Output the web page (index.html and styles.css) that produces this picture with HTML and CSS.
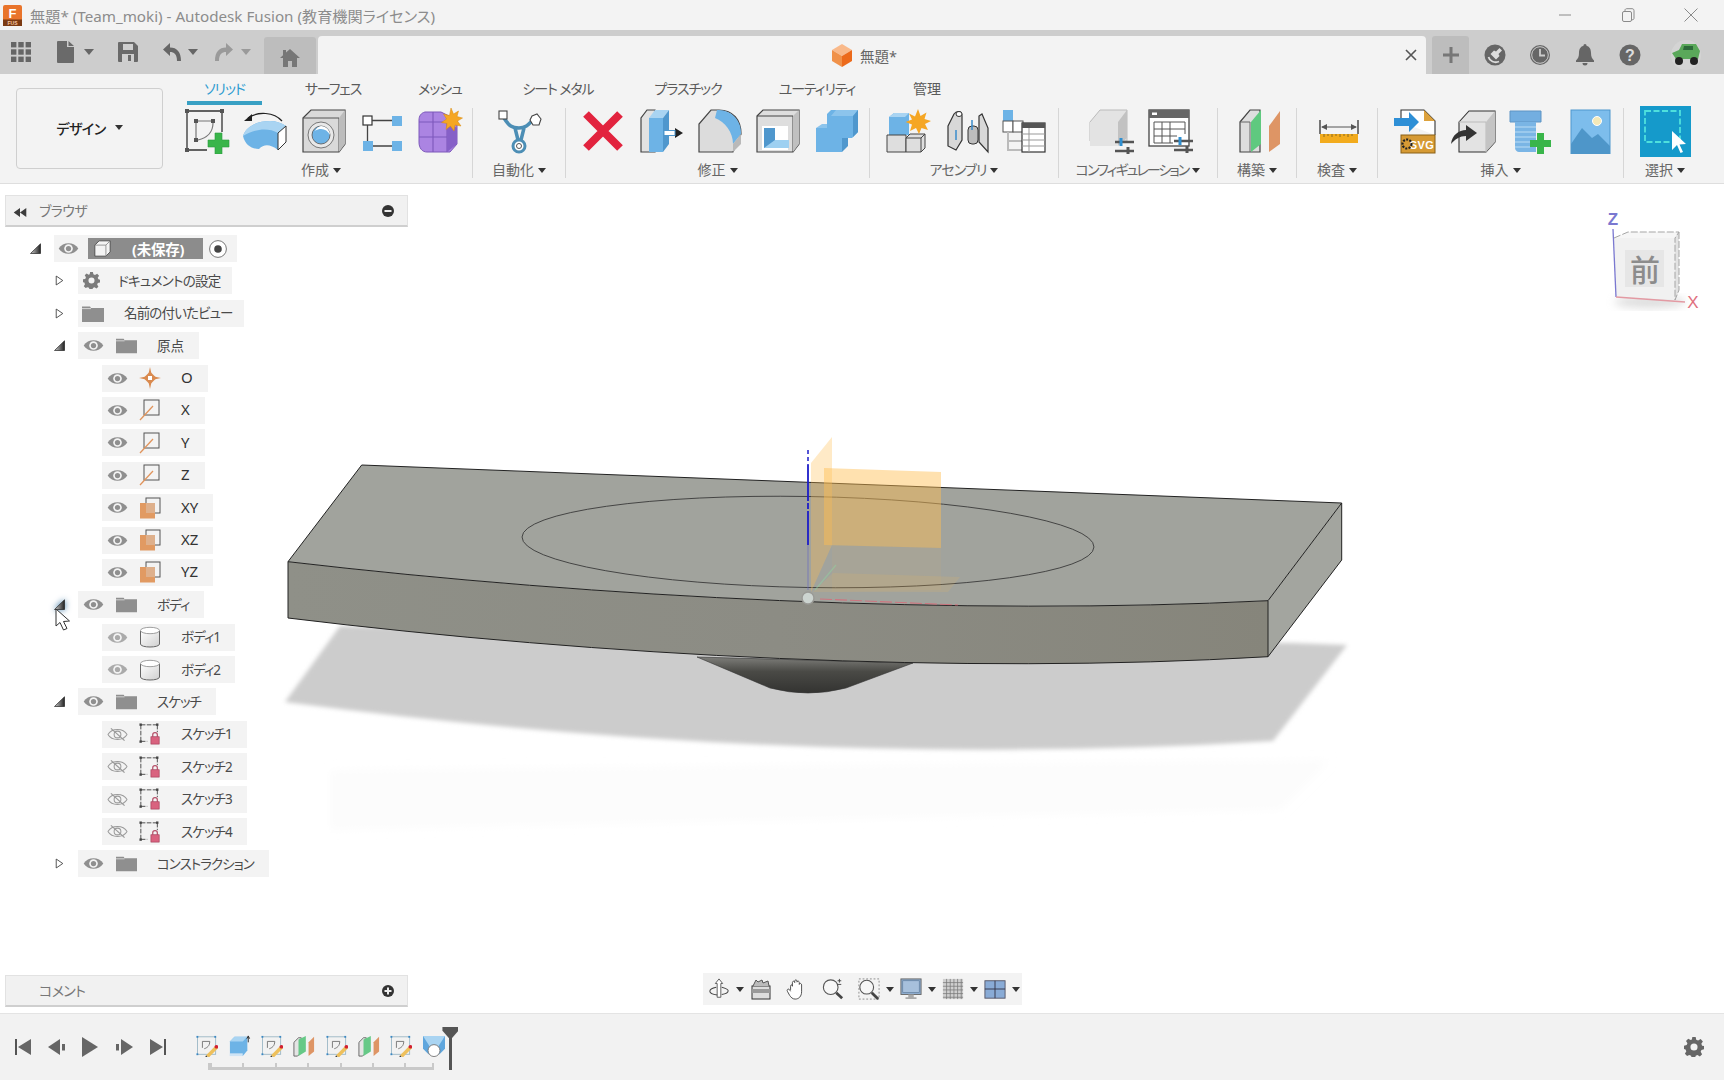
FILE: index.html
```html
<!DOCTYPE html>
<html lang="ja">
<head>
<meta charset="utf-8">
<title>Autodesk Fusion</title>
<link rel="stylesheet" href="styles.css">
</head>
<body>
<svg class="defs" aria-hidden="true">
  <defs>
    <linearGradient id="twistg" x1="0" y1="0" x2="1" y2="0"><stop offset="0" stop-color="#d0d0d0"/><stop offset="1" stop-color="#222"/></linearGradient>
    <linearGradient id="bodyg" x1="0" y1="0" x2="1" y2="1"><stop offset="0" stop-color="#fff"/><stop offset="1" stop-color="#cfcfcf"/></linearGradient>
    <symbol id="eye" viewBox="0 0 22 16"><path d="M0.5 8C5 0.5 17 0.5 21.5 8C17 15.5 5 15.5 0.5 8Z" fill="#8f8f8f"/><circle cx="11" cy="8" r="4.6" fill="#f3f3f3"/><circle cx="11" cy="8" r="2.8" fill="#8f8f8f"/></symbol>
    <symbol id="eyeoff" viewBox="0 0 22 16"><path d="M0.8 8C5 1 17 1 21.2 8C17 15 5 15 0.8 8Z" fill="none" stroke="#9a9a9a" stroke-width="1.1"/><circle cx="11" cy="8" r="3.6" fill="none" stroke="#9a9a9a" stroke-width="1.1"/><path d="M4 1.5L18.5 14.5" stroke="#9a9a9a" stroke-width="1.3"/></symbol>
    <symbol id="folder" viewBox="0 0 22 17"><path d="M0 1.5h8l1 1.5h13v14H0Z" fill="#8f8f8f"/><path d="M0 3.6h9" stroke="#e8e8e8" stroke-width="0.8"/></symbol>
    <symbol id="twopen" viewBox="0 0 11 11"><path d="M0.5 10.5L10.5 0.8V10.5Z" fill="url(#twistg)" stroke="#222" stroke-width="0.7"/></symbol>
    <symbol id="twclosed" viewBox="0 0 11 13"><path d="M1.5 1L9.5 6.5L1.5 12Z" fill="#fff" stroke="#333" stroke-width="1"/></symbol>
    <symbol id="axis" viewBox="0 0 22 22"><rect x="5" y="1" width="15" height="15" fill="none" stroke="#555" stroke-width="1"/><path d="M1 21L14 7" stroke="#e0945c" stroke-width="1.3"/></symbol>
    <symbol id="plane" viewBox="0 0 22 22"><rect x="7" y="1" width="14" height="15" fill="none" stroke="#555" stroke-width="1"/><rect x="1" y="6" width="15" height="15.5" fill="#e19a62"/><rect x="7" y="6" width="9" height="10" fill="#deb08c"/></symbol>
    <symbol id="body" viewBox="0 0 22 22"><path d="M1.5 5v13c0 4 19 4 19 0V5" fill="url(#bodyg)" stroke="#666" stroke-width="1"/><ellipse cx="11" cy="4.5" rx="9.5" ry="3.2" fill="#fff" stroke="#888" stroke-width="0.8"/></symbol>
    <symbol id="sketchlock" viewBox="0 0 24 24"><g fill="none" stroke="#444" stroke-width="1" stroke-dasharray="5 1.5"><path d="M2 2H19M2 2V20M2 20H9M20 2V10"/></g><g fill="#444"><rect x="0.5" y="0.5" width="2.6" height="2.6"/><rect x="18.6" y="0.5" width="2.6" height="2.6"/><rect x="0.5" y="19" width="2.6" height="2.6"/></g><path d="M15 15v-2.2c0-3 5-3 5 0V15" fill="none" stroke="#b34b64" stroke-width="1.3"/><rect x="13" y="15" width="9" height="8" fill="#d9637f" stroke="#a03a55" stroke-width="0.7"/></symbol>
    <symbol id="tlsketch" viewBox="0 0 24 24"><rect x="1.5" y="2" width="20" height="19" fill="none" stroke="#8ab" stroke-width="0.8"/><g fill="#3b88c3"><rect x="0.5" y="1" width="2" height="2"/><rect x="20" y="1" width="2" height="2"/><rect x="0.5" y="20" width="2" height="2"/></g><path d="M7 7h8M7 7v7M15 7c0 5-3 7-6 8" fill="none" stroke="#666" stroke-width="0.9"/><path d="M11 22L21 12l3 2.5L14 24.5Z" fill="#eec05c"/><path d="M11 22l-1 2.5 3 0Z" fill="#333"/><circle cx="22.2" cy="12.8" r="2" fill="#d21f2f"/></symbol>
    <symbol id="tlplane" viewBox="0 0 24 24"><path d="M1 8L6 3H9V19L5 23H1Z" fill="#e4e4e4" stroke="#555" stroke-width="0.9"/><path d="M6 5L14 1V18L6 23Z" fill="#66c987"/><path d="M17 8L23 2V18L17 23Z" fill="#de9565"/></symbol>
  </defs>
</svg>

<header class="titlebar">
  <svg class="appicon" viewBox="0 0 19 21"><rect width="19" height="21" rx="2" fill="#e9742b"/><rect y="14.5" width="19" height="6.5" fill="#7b3a12"/><text x="9.5" y="12.5" class="appicon-f">F</text><text x="9.5" y="19.8" class="appicon-s">FUS</text></svg>
  <span class="title">無題* (Team_moki) - Autodesk Fusion (教育機関ライセンス)</span>
  <div class="winctl">
    <svg viewBox="0 0 14 14"><path d="M1 7H13" stroke="#8a8a8a" fill="none"/></svg>
    <svg viewBox="0 0 14 14"><rect x="1.5" y="3.5" width="9" height="10" rx="1.5" fill="none" stroke="#8a8a8a"/><path d="M4 3.2V2.2C4 1 5 .7 6 .7h5c1.4 0 2 .8 2 2v7.5c0 1-.6 1.6-2 1.6" fill="none" stroke="#8a8a8a"/></svg>
    <svg viewBox="0 0 14 14"><path d="M.5 .5L13.5 13.5M13.5 .5L.5 13.5" stroke="#8a8a8a" fill="none"/></svg>
  </div>
</header>

<nav class="tabbar">
  <div class="qat">
    <svg class="q-grid" viewBox="0 0 20 20"><g fill="#666"><rect width="5.4" height="5.4"/><rect x="7.3" width="5.4" height="5.4"/><rect x="14.6" width="5.4" height="5.4"/><rect y="7.3" width="5.4" height="5.4"/><rect x="7.3" y="7.3" width="5.4" height="5.4"/><rect x="14.6" y="7.3" width="5.4" height="5.4"/><rect y="14.6" width="5.4" height="5.4"/><rect x="7.3" y="14.6" width="5.4" height="5.4"/><rect x="14.6" y="14.6" width="5.4" height="5.4"/></g></svg>
    <svg class="q-doc" viewBox="0 0 18 22"><path d="M1 0H10V6H17V21a1 1 0 0 1-1 1H1a1 1 0 0 1-1-1V1a1 1 0 0 1 1-1ZM11.500 0L17 5H11.500Z" fill="#6a6a6a"/></svg>
    <span class="caret q-c1"></span>
    <svg class="q-save" viewBox="0 0 20 20"><path d="M1 0H16L20 4V19a1 1 0 0 1-1 1H1a1 1 0 0 1-1-1V1a1 1 0 0 1 1-1Z" fill="#6a6a6a"/><rect x="5" y="2" width="10" height="6" fill="#cfcfcf"/><rect x="4" y="12" width="12" height="8" fill="#cfcfcf"/><rect x="10" y="13" width="3" height="6" fill="#6a6a6a"/></svg>
    <svg class="q-undo" viewBox="0 0 20 20"><path d="M8 1L1 7.500L8 14V10C12 10 15 12 15 19H19C19 10 15 5.500 8 5.500Z" fill="#666"/></svg>
    <span class="caret q-c2"></span>
    <svg class="q-redo" viewBox="0 0 20 20"><path d="M12 1L19 7.500L12 14V10C8 10 5 12 5 19H1C1 10 5 5.500 12 5.500Z" fill="#9a9a9a"/></svg>
    <span class="caret q-c3"></span>
    <div class="hometab"><svg viewBox="0 0 20 18"><path d="M10 0L20 9H17V18H12V12H8V18H3V9H0L3 6.300V1H6V3.600Z" fill="#777"/></svg></div>
  </div>
  <div class="doctab">
    <svg class="cube" viewBox="0 0 20 23"><path d="M10 0L20 6L10 12L0 6Z" fill="#f9b98a"/><path d="M0 6L10 12V23L0 17Z" fill="#f09149"/><path d="M20 6L10 12V23L20 17Z" fill="#ec6a1b"/></svg>
    <span class="doctitle">無題*</span>
    <svg class="tabclose" viewBox="0 0 12 12"><path d="M1 1L11 11M11 1L1 11" stroke="#555" stroke-width="1.6" fill="none"/></svg>
  </div>
  <div class="plustab"><svg viewBox="0 0 16 16"><path d="M6.500 0h3v6.500H16v3H9.500V16h-3V9.500H0v-3h6.500Z" fill="#777"/></svg></div>
  <div class="tabicons">
    <svg class="ti" viewBox="0 0 22 22"><circle cx="11" cy="11" r="10.500" fill="#666"/><path d="M15.500 4l-3.500 3.500-2-1-3.500 3.500 5.500 5.500 3.500-3.500-1-2 3.500-3.500Z" fill="#ddd"/><path d="M4.500 13c1 4 6 6.500 10.500 4.500" fill="none" stroke="#ddd" stroke-width="1.800"/></svg>
    <svg class="ti" viewBox="0 0 22 22"><circle cx="11" cy="11" r="10" fill="#666"/><circle cx="11" cy="11" r="8.300" fill="none" stroke="#ccc" stroke-width="1"/><path d="M11 5V11.500H16" fill="none" stroke="#ccc" stroke-width="1.800"/></svg>
    <svg class="ti" viewBox="0 0 22 22"><path d="M11 0c1 0 1.500.8 1.500 1.800C16 2.700 17 6 17 9c0 4 1 5.500 3 7.500V18H2v-1.500C4 14.500 5 13 5 9c0-3 1-6.300 4.500-7.200C9.500.8 10 0 11 0ZM8.500 19h5a2.500 2.500 0 0 1-5 0Z" fill="#666"/></svg>
    <svg class="ti" viewBox="0 0 22 22"><circle cx="11" cy="11" r="10.500" fill="#666"/><text x="11" y="16.500" class="help-q">?</text></svg>
    <svg class="avatar" viewBox="0 0 30 30"><circle cx="15" cy="15" r="15" fill="#d4d4d4"/><path d="M1 13L8 10L11 4H25L29 11L27 19H5Z" fill="#5aa85a"/><path d="M13 6H22V10H12Z" fill="#2d6a3a"/><circle cx="8" cy="21" r="4" fill="#222"/><circle cx="23" cy="21" r="4" fill="#222"/></svg>
  </div>
</nav>

<section class="ribbon">
  <div class="design-wrap"><button class="design">デザイン<span class="caret"></span></button></div>
  <div class="ribbon-main">
    <div class="tabs">
      <span class="tab active">ソリッド</span>
      <span class="tab">サーフェス</span>
      <span class="tab">メッシュ</span>
      <span class="tab">シート メタル</span>
      <span class="tab">プラスチック</span>
      <span class="tab">ユーティリティ</span>
      <span class="tab">管理</span>
    </div>
    <div class="groups">
      <div class="group">
        <div class="icons">
          <svg class="ic" viewBox="0 0 46 46"><g fill="none" stroke="#333" stroke-width="1.300"><path d="M3 3H38M3 3V42M3 42H23M38 3V24"/></g><g fill="#555"><rect x="1" y="1" width="4" height="4"/><rect x="36" y="1" width="4" height="4"/><rect x="1" y="40" width="4" height="4"/><rect x="10" y="11" width="4" height="4"/><rect x="27" y="11" width="4" height="4"/><rect x="10" y="30" width="4" height="4"/></g><path d="M14 13h13M12 15v15M29 15c0 9-6 15-15 17" fill="none" stroke="#777" stroke-width="1.200"/><path d="M31 25h7v7h7v7h-7v7h-7v-7h-7v-7h7Z" fill="#39b54a" stroke="#2a9a3c" stroke-width=".6"/></svg>
          <svg class="ic" viewBox="0 0 46 46"><path d="M40 13C32 4 16 3 6 10" fill="none" stroke="#222" stroke-width="1.200"/><path d="M2 13L10 6L10 13Z" fill="#222"/><path d="M1 28C4 18 16 13 28 13C34 13 40 15 44 18L36 26V42C28 36 22 36 17 41C10 41 3 37 1 28Z" fill="#6db3e6"/><path d="M1 28C4 18 16 13 28 13C34 13 40 15 44 18L36 25C26 19 12 21 1 28Z" fill="#a9d4f2"/><path d="M36 25L44 18V34L36 42Z" fill="#fff" stroke="#333" stroke-width="1"/></svg>
          <svg class="ic" viewBox="0 0 46 46"><path d="M2 10L10 2H44V36L38 44H2Z" fill="#d9d9d9" stroke="#444" stroke-width="1.200"/><path d="M2 10H38V44" fill="none" stroke="#555"/><path d="M38 10L44 2V36L38 44Z" fill="#bcbcbc"/><circle cx="20" cy="27" r="13" fill="#e8e8e8" stroke="#777" stroke-width="1"/><circle cx="20" cy="27" r="9" fill="#6db3e6" stroke="#555" stroke-width=".8"/><path d="M20 18a9 9 0 0 1 9 9c-2-4-5-6-9-6-2 0-4 .5-6 2a9 9 0 0 1 6-5Z" fill="#fff"/></svg>
          <svg class="ic" viewBox="0 0 46 46"><rect x="4" y="8" width="9" height="9" fill="#fff" stroke="#333" stroke-width="1.200"/><rect x="33" y="8" width="10" height="10" fill="#6db3e6"/><rect x="4" y="33" width="10" height="10" fill="#6db3e6"/><rect x="33" y="33" width="10" height="10" fill="#6db3e6"/><path d="M13 12.500H33M8.500 17V33M14 38H33" stroke="#444" stroke-width="1.300" fill="none"/></svg>
          <svg class="ic" viewBox="0 0 46 46"><path d="M8 4H24L40 12V36L33 44H10C5 44 2 40 2 34V12C2 8 4 5 8 4Z" fill="#ab84e2" stroke="#7d58bb"/><path d="M2 14H30V44M2 29H30M16 4V44" fill="none" stroke="#7d58bb" stroke-width="1.100"/><path d="M30 14L40 20V36L30 44Z" fill="#8660c7"/><path d="M34 0l2.500 6 5-3-1.500 5.500 5.500 1.500-5 3 3.500 5-6-1-1 6-3.500-5-4.500 3.500 1-6-5.500-1 5-3.500-3-5 6 1.500Z" fill="#f5a623" stroke="#d98b0e" stroke-width=".5"/></svg>
        </div>
        <div class="glabel"><span>作成</span><span class="caret"></span></div>
      </div>
      <div class="group">
        <div class="icons noshift">
          <svg class="ic" viewBox="0 0 46 46"><path d="M8 10C13 18 16 20 23 20C30 20 33 16 37 12M19 20L22 32M28 20L25 32" fill="none" stroke="#4c8eb5" stroke-width="3.500"/><circle cx="23" cy="38" r="6" fill="#fff" stroke="#4c8eb5" stroke-width="3"/><circle cx="23" cy="38" r="2.500" fill="none" stroke="#555"/><rect x="3" y="3" width="8" height="8" fill="#fff" stroke="#444" stroke-width="1.100"/><path d="M36 8l5-2 4 5-2 6-6 0-3-5Z" fill="#fff" stroke="#444" stroke-width="1.100"/></svg>
        </div>
        <div class="glabel"><span>自動化</span><span class="caret"></span></div>
      </div>
      <div class="group">
        <div class="icons">
          <svg class="ic" viewBox="0 0 46 46"><path d="M4 6L38 40M38 6L4 40" stroke="#e2233e" stroke-width="8" fill="none" transform="translate(2 0)"/></svg>
          <svg class="ic" viewBox="0 0 46 46"><path d="M2 44V10L8 2H16V44Z" fill="#e2e2e2" stroke="#444" stroke-width="1.200"/><path d="M10 10H24V44H10Z" fill="#6db3e6"/><path d="M10 10L16 2H30L24 10Z" fill="#a9d4f2"/><path d="M24 10L30 2V36L24 44Z" fill="#4f97cd"/><path d="M26 24H36V20L44 25L36 30V26H26Z" fill="#222"/><rect x="25" y="22.500" width="11" height="5" fill="#fff" stroke="#4f97cd"/></svg>
          <svg class="ic" viewBox="0 0 46 46"><path d="M2 44V16L14 2H22C36 2 44 12 44 26L36 44Z" fill="#dcdcdc" stroke="#444" stroke-width="1.200"/><path d="M20 2C34 1 45 13 44 26L36 36C36 24 28 14 18 10Z" fill="#6db3e6"/><path d="M36 36L44 26V36L36 44Z" fill="#b9b9b9"/></svg>
          <svg class="ic" viewBox="0 0 46 46"><path d="M2 8L8 2H44V36L38 44H2Z" fill="#dedede" stroke="#444" stroke-width="1.200"/><path d="M2 8H38V44" fill="none" stroke="#444"/><path d="M38 8L44 2V36L38 44Z" fill="#c0c0c0"/><rect x="7" y="18" width="26" height="24" fill="#fff"/><path d="M9 20H19V32L34 32V40H9Z" fill="#9ed0f1"/><path d="M9 20H20V32L9 40Z" fill="#4f97cd"/></svg>
          <svg class="ic" viewBox="0 0 46 46"><path d="M17 2L13 6V20H2V44H28V30H38L44 24V2Z" fill="#6db3e6"/><path d="M22 2H44L39 8H17Z" fill="#8cc4ec"/><path d="M39 8L44 2V24L39 29Z" fill="#4f97cd"/><path d="M2 20L8 16H13V20Z" fill="#8cc4ec"/><path d="M28 30L34 30V38L28 44Z" fill="#4f97cd"/></svg>
        </div>
        <div class="glabel"><span>修正</span><span class="caret"></span></div>
      </div>
      <div class="group">
        <div class="icons">
          <svg class="ic" viewBox="0 0 46 46"><path d="M4 27V9L9 5H24V27Z" fill="#6db3e6"/><path d="M4 9L9 5H24L20 9Z" fill="#a9d4f2"/><path d="M2 44V27H21V44Z" fill="#dedede" stroke="#444"/><path d="M21 44V30L25 26H40V40L36 44Z" fill="#dedede" stroke="#444"/><path d="M36 44V30H21M36 30L40 26" fill="none" stroke="#444"/><path d="M33 1l2.500 7 6-3.500-2 6.500 6.500 2-6 3 3 6-6.500-2-2.500 6-3-6-6 3 2-6.500-6.500-2.500 6.500-2.500-3-6 6 3Z" fill="#f5a623"/></svg>
          <svg class="ic" viewBox="0 0 46 46"><path d="M4 18L10 6C13 2 18 3 18 8V32L12 42L4 38Z" fill="#d8d8d8" stroke="#333" stroke-width="1.200"/><ellipse cx="15" cy="6" rx="3" ry="2.500" fill="#fff" stroke="#333"/><path d="M38 6L44 20V44L35 34V8Z" fill="#d8d8d8" stroke="#333" stroke-width="1.200"/><rect x="24" y="18" width="10" height="18" rx="4" fill="#bdbdbd" stroke="#333"/><path d="M28 12V22M12 22V32" stroke="#3a8ccc" stroke-width="1.500"/></svg>
          <svg class="ic" viewBox="0 0 46 46"><rect x="1" y="2" width="10" height="11" fill="#6db3e6"/><rect x="1" y="13" width="10" height="11" fill="#fff" stroke="#555"/><rect x="11" y="13" width="10" height="11" fill="#fff" stroke="#555"/><path d="M6 24V42H20M6 33H20" stroke="#bbb" stroke-width="2" fill="none"/><rect x="20" y="15" width="23" height="29" fill="#fff" stroke="#333" stroke-width="1.200"/><rect x="20" y="15" width="23" height="5" fill="#555"/><path d="M20 26H43M20 32H43M20 38H43M27 20V44" stroke="#999" fill="none"/></svg>
        </div>
        <div class="glabel kana"><span>アセンブリ</span><span class="caret"></span></div>
      </div>
      <div class="group">
        <div class="icons">
          <svg class="ic" viewBox="0 0 46 46"><path d="M2 14L12 2H39V33H2Z" fill="#e3e3e3" stroke="#bbb"/><path d="M2 14H30V38H2Z" fill="#e3e3e3"/><path d="M30 14L39 2V30L30 38Z" fill="#c2c2c2"/><path d="M27 34H46M27 43H46" stroke="#555" stroke-width="2.500"/><path d="M33 30V38" stroke="#2f8fd1" stroke-width="3"/><path d="M40 39V46" stroke="#555" stroke-width="3"/></svg>
          <svg class="ic" viewBox="0 0 46 46"><rect x="2" y="2" width="40" height="36" fill="#fff" stroke="#444" stroke-width="1.300"/><rect x="2" y="2" width="40" height="8" fill="#666"/><rect x="5" y="4.500" width="5" height="2.500" fill="#fff"/><path d="M7 14H38M7 21H38M7 28H30M7 35H26M7 14V35M15 14V35M23 14V35M38 14V26" stroke="#555" fill="none"/><path d="M27 33H46M27 42H46" stroke="#555" stroke-width="2.500"/><path d="M33 29V37" stroke="#2f8fd1" stroke-width="3"/><path d="M40 38V45" stroke="#555" stroke-width="3"/></svg>
        </div>
        <div class="glabel kana-long"><span>コンフィギュレーション</span><span class="caret"></span></div>
      </div>
      <div class="group">
        <div class="icons">
          <svg class="ic" viewBox="0 0 46 46"><path d="M3 14L13 2H23V44H3Z" fill="#dedede" stroke="#444" stroke-width="1.200"/><path d="M14 14L24 2V36L14 44Z" fill="#5fc97f"/><path d="M3 14H13V44" fill="none" stroke="#666"/><path d="M32 18L43 3V36L32 44Z" fill="#de9565"/></svg>
        </div>
        <div class="glabel"><span>構築</span><span class="caret"></span></div>
      </div>
      <div class="group">
        <div class="icons">
          <svg class="ic" viewBox="0 0 46 46"><path d="M3 12V26M41 12V26" stroke="#333" stroke-width="1.300"/><path d="M5 19H39" stroke="#555"/><path d="M4 19L10 16V22ZM40 19L34 16V22Z" fill="#555"/><rect x="3" y="26" width="38" height="9" fill="#f2ab1d"/><path d="M7 26v3M11 26v2M15 26v3M19 26v2M23 26v3M27 26v2M31 26v3M35 26v2" stroke="#8a6a20"/></svg>
        </div>
        <div class="glabel"><span>検査</span><span class="caret"></span></div>
      </div>
      <div class="group">
        <div class="icons">
          <svg class="ic" viewBox="0 0 46 46"><path d="M9 14V2H32L43 13V27" fill="#fff" stroke="#333" stroke-width="1.100"/><path d="M32 2L43 13H32Z" fill="#dda23c"/><path d="M2 10H17V4L27 14L17 24V18H2Z" fill="#2e8fd6"/><rect x="9" y="27" width="34" height="18" fill="#d69a34" stroke="#8a6116"/><text x="30" y="41" class="svgtext">SVG</text><circle cx="15" cy="36" r="4.500" fill="none" stroke="#222" stroke-width="2.200" stroke-dasharray="2 1.300"/></svg>
          <svg class="ic" viewBox="0 0 46 46"><path d="M8 14L18 3H44V34L35 44H8Z" fill="#e3e3e3" stroke="#333" stroke-width="1.100"/><path d="M8 14H35V44" fill="none" stroke="#bbb"/><path d="M35 14L44 3V34L35 44Z" fill="#c4c4c4"/><path d="M0 36C1 27 8 22 15 22V17L26 25L15 33V28C9 28 4 31 0 36Z" fill="#333"/></svg>
          <svg class="ic" viewBox="0 0 46 46"><path d="M1 3H32V14H1Z" fill="#73aee0" stroke="#5e94c4"/><path d="M6 14H27V44H10C8 44 6 42 6 40Z" fill="#7ab5e5"/><path d="M6 19H27M6 24H27M6 29H27M6 34H25M6 39H21" stroke="#a6d0f0" stroke-width="1.500"/><path d="M24 25h7v7h7v7h-7v7h-7v-7h-7v-7h7Z" transform="translate(4 0)" fill="#39b54a"/></svg>
          <svg class="ic" viewBox="0 0 46 46"><rect x="3" y="2" width="39" height="45" fill="#7dbdec" stroke="#4f97cd"/><path d="M3 36L14 20L24 30L30 26L42 38V47H3Z" fill="#4e96c9"/><circle cx="29" cy="13" r="4.500" fill="#f3e9b8" stroke="#fff"/></svg>
        </div>
        <div class="glabel"><span>挿入</span><span class="caret"></span></div>
      </div>
      <div class="group last">
        <div class="icons noshift selicons">
          <svg class="sel" viewBox="0 0 51 51"><rect width="51" height="51" fill="#159acb"/><rect x="5" y="5" width="35" height="31" fill="none" stroke="#4ee0dd" stroke-width="1.800" stroke-dasharray="6 2.500"/><path d="M32 25L32 44L37 39L40.500 47L43 46L39.500 38.500L46 38Z" fill="#fff"/></svg>
        </div>
        <div class="glabel"><span>選択</span><span class="caret"></span></div>
      </div>
    </div>
  </div>
</section>

<main class="canvas">
  <svg class="scene" viewBox="0 184 1724 829">
    <defs>
      <filter id="soft" x="-5%" y="-5%" width="110%" height="110%"><feGaussianBlur stdDeviation="2"/></filter>
      <filter id="softer" x="-20%" y="-20%" width="140%" height="140%"><feGaussianBlur stdDeviation="4"/></filter>
      <linearGradient id="cone" x1="0" y1="0" x2="0" y2="1"><stop offset="0" stop-color="#7e7e7a"/><stop offset=".4" stop-color="#4a4a46"/><stop offset="1" stop-color="#333331"/></linearGradient>
      <linearGradient id="front" x1="0" y1="0" x2="1" y2="0"><stop offset="0" stop-color="#8f9088"/><stop offset=".5" stop-color="#8c8c84"/><stop offset="1" stop-color="#86857b"/></linearGradient>
    </defs>
    <path class="shadow-faint" d="M330 770L1330 760L1280 810L330 830Z" filter="url(#softer)"/>
    <path class="shadow" d="M340 626L285 702Q800 770 1273 741L1347 645L1293 643Z" filter="url(#soft)"/>
    <path d="M697 657L770 688Q808 698 846 688L913 663Z" fill="url(#cone)" stroke="#333" stroke-width=".6"/>
    <path class="face-top" d="M361.700 465L1341.700 503L1268 600.700C960 616 600 598 288 561.700Z"/>
    <path class="face-side" d="M1341.700 503V560L1268 656.700V600.700Z"/>
    <path d="M288 561.700C600 598 960 616 1268 600.700V656.700C960 675 600 656 288 618Z" fill="url(#front)"/>
    <g class="edge">
      <path d="M288 561.700L361.700 465L1341.700 503V560L1268 656.700C960 675 600 656 288 618Z"/>
      <path d="M288 561.700C600 598 960 616 1268 600.700L1341.700 503M1268 600.700V656.700"/>
    </g>
    <ellipse class="sketch" cx="808" cy="542" rx="286" ry="45.500" transform="rotate(1 808 542)"/>
    <path d="M811 463L832 437V545L811 592Z" fill="#ffbe50" opacity=".32"/>
    <path d="M824 468L941 472V548L824 545Z" fill="#ffbe50" opacity=".46"/>
    <path d="M832 545L941 548V590L832 592Z" fill="#ffbe50" opacity=".07"/>
    <path d="M833 573L960 577L948 592L813 592Z" fill="#ffbe50" opacity=".13"/>
    <path d="M808 450V465" stroke="#1c1cc8" stroke-width="1.500" stroke-dasharray="4 3"/>
    <path d="M808 465V545" stroke="#1c1cc8" stroke-width="1.800" stroke-dasharray="36 2 6 2"/>
    <path d="M808 545V590" stroke="#5a5ac8" stroke-width="1" opacity=".55"/>
    <path d="M820 599L958 605" stroke="#d86a78" stroke-width="1.100" stroke-dasharray="12 3" opacity=".8"/>
    <path d="M815 590L836 565" stroke="#8ed8a0" stroke-width="1.200" opacity=".45"/>
    <circle cx="808" cy="598" r="6" fill="#ccd4d0" stroke="#9a9a96" stroke-width="1.500"/>

    <ellipse cx="1650" cy="302" rx="36" ry="6" fill="#bbb" opacity=".5" filter="url(#softer)"/>
    <path class="cube-face" d="M1614 238H1675V300L1616 297Z"/>
    <path class="cube-face2" d="M1614 238L1628 232H1679L1675 238Z"/>
    <path class="cube-face3" d="M1675 238L1679 232V290L1675 300Z"/>
    <path class="cube-edge" d="M1614 238L1628 232H1679L1675 238M1679 232V290L1675 300V238"/>
    <rect x="1625" y="250" width="39" height="37" fill="#e6e6e6"/>
    <text x="1645" y="281" class="cube-text">前</text>
    <path d="M1613 229L1616 297" stroke="#7a78d0" stroke-width="1.300"/>
    <path d="M1616 297L1685 302" stroke="#e39aa3" stroke-width="1.300"/>
    <text x="1613" y="225" class="cube-z">Z</text>
    <text x="1693" y="308" class="cube-x">X</text>
  </svg>

  <aside class="browser">
    <div class="panelhead">
      <svg class="rew" viewBox="0 0 14 10"><path d="M7 0V10L0 5ZM14 0V10L7 5Z" fill="#3c3c3c"/></svg>
      <span class="panelname">ブラウザ</span>
      <svg class="panelbtn" viewBox="0 0 12 12"><circle cx="6" cy="6" r="6" fill="#333"/><rect x="2.500" y="5" width="7" height="2" fill="#eee"/></svg>
    </div>
    <div class="tree">
      <div class="line l0">
        <svg class="tw twa" viewBox="0 0 11 11"><use href="#twopen"/></svg>
        <div class="row root">
          <svg class="eye" viewBox="0 0 22 16"><use href="#eye"/></svg>
          <div class="rootbox"><svg viewBox="0 0 20 20"><path d="M1 6L6 1H19V14L14 19H1Z" fill="#f4f4f4" stroke="#444"/><path d="M1 6H14V19M14 6L19 1" fill="none" stroke="#888"/></svg><b>(未保存)</b></div>
          <svg class="radio" viewBox="0 0 18 18"><circle cx="9" cy="9" r="8.400" fill="#fff" stroke="#777"/><circle cx="9" cy="9" r="3.800" fill="#444"/></svg>
        </div>
      </div>
      <div class="line l1">
        <svg class="tw twc" viewBox="0 0 11 13"><use href="#twclosed"/></svg>
        <div class="row doc">
          <svg class="gear" viewBox="0 0 18 18"><path d="M7.500 0h3l.5 2.500 1.700.7L15 1.900 17 4l-1.400 2.100.7 1.700L18 8.200v2.900l-2.300.6-.7 1.600 1.300 2.200-2 2-2.200-1.300-1.600.7-.6 2.300h-3l-.5-2.400-1.700-.7L2.800 17l-2-2 1.300-2.100-.7-1.700L-.1 10.800V7.800l2.500-.5.7-1.700L1.800 3.500l2-2 2.200 1.300 1.100-.5ZM9 5.800a3.200 3.200 0 1 0 0 6.400 3.200 3.200 0 0 0 0-6.400Z" fill="#7c7c7c"/></svg>
          <span class="lab lab-doc">ドキュメントの設定</span>
        </div>
      </div>
      <div class="line l1">
        <svg class="tw twc" viewBox="0 0 11 13"><use href="#twclosed"/></svg>
        <div class="row doc">
          <svg class="fold-nv" viewBox="0 0 22 17"><use href="#folder"/></svg>
          <span class="lab lab-nv">名前の付いたビュー</span>
        </div>
      </div>
      <div class="line l1">
        <svg class="tw twa" viewBox="0 0 11 11"><use href="#twopen"/></svg>
        <div class="row">
          <svg class="eye" viewBox="0 0 22 16"><use href="#eye"/></svg>
          <span class="icell"><svg class="fold" viewBox="0 0 22 17"><use href="#folder"/></svg></span>
          <span class="lab lab-kanji">原点</span>
        </div>
      </div>
      <div class="line l2"><div class="row">
        <svg class="eye" viewBox="0 0 22 16"><use href="#eye"/></svg>
        <span class="icell"><svg class="ti-s" viewBox="0 0 22 22"><path d="M11 0L12.500 7H9.500ZM11 22L12.500 15H9.500ZM0 11L7 12.500V9.500ZM22 11L15 12.500V9.500Z" fill="#d98a4f"/><path d="M11 4.500L17.500 11L11 17.500L4.500 11Z" fill="#d98a4f"/><rect x="9" y="9" width="4" height="4" fill="#fff"/></svg></span>
        <span class="lab lat">O</span>
      </div></div>
      <div class="line l2"><div class="row">
        <svg class="eye" viewBox="0 0 22 16"><use href="#eye"/></svg>
        <span class="icell"><svg class="ti-s" viewBox="0 0 22 22"><use href="#axis"/></svg></span>
        <span class="lab lat">X</span>
      </div></div>
      <div class="line l2"><div class="row">
        <svg class="eye" viewBox="0 0 22 16"><use href="#eye"/></svg>
        <span class="icell"><svg class="ti-s" viewBox="0 0 22 22"><use href="#axis"/></svg></span>
        <span class="lab lat">Y</span>
      </div></div>
      <div class="line l2"><div class="row">
        <svg class="eye" viewBox="0 0 22 16"><use href="#eye"/></svg>
        <span class="icell"><svg class="ti-s" viewBox="0 0 22 22"><use href="#axis"/></svg></span>
        <span class="lab lat">Z</span>
      </div></div>
      <div class="line l2"><div class="row">
        <svg class="eye" viewBox="0 0 22 16"><use href="#eye"/></svg>
        <span class="icell"><svg class="ti-s" viewBox="0 0 22 22"><use href="#plane"/></svg></span>
        <span class="lab lat">XY</span>
      </div></div>
      <div class="line l2"><div class="row">
        <svg class="eye" viewBox="0 0 22 16"><use href="#eye"/></svg>
        <span class="icell"><svg class="ti-s" viewBox="0 0 22 22"><use href="#plane"/></svg></span>
        <span class="lab lat">XZ</span>
      </div></div>
      <div class="line l2"><div class="row">
        <svg class="eye" viewBox="0 0 22 16"><use href="#eye"/></svg>
        <span class="icell"><svg class="ti-s" viewBox="0 0 22 22"><use href="#plane"/></svg></span>
        <span class="lab lat">YZ</span>
      </div></div>
      <div class="line l1">
        <svg class="tw twa glow" viewBox="0 0 11 11"><use href="#twopen"/></svg>
        <div class="row">
          <svg class="eye" viewBox="0 0 22 16"><use href="#eye"/></svg>
          <span class="icell"><svg class="fold" viewBox="0 0 22 17"><use href="#folder"/></svg></span>
          <span class="lab">ボディ</span>
        </div>
      </div>
      <div class="line l2"><div class="row">
        <svg class="eye dim" viewBox="0 0 22 16"><use href="#eye"/></svg>
        <span class="icell"><svg class="ti-s" viewBox="0 0 22 22"><use href="#body"/></svg></span>
        <span class="lab">ボディ1</span>
      </div></div>
      <div class="line l2"><div class="row">
        <svg class="eye dim" viewBox="0 0 22 16"><use href="#eye"/></svg>
        <span class="icell"><svg class="ti-s" viewBox="0 0 22 22"><use href="#body"/></svg></span>
        <span class="lab">ボディ2</span>
      </div></div>
      <div class="line l1">
        <svg class="tw twa" viewBox="0 0 11 11"><use href="#twopen"/></svg>
        <div class="row">
          <svg class="eye" viewBox="0 0 22 16"><use href="#eye"/></svg>
          <span class="icell"><svg class="fold" viewBox="0 0 22 17"><use href="#folder"/></svg></span>
          <span class="lab">スケッチ</span>
        </div>
      </div>
      <div class="line l2"><div class="row">
        <svg class="eye" viewBox="0 0 22 16"><use href="#eyeoff"/></svg>
        <span class="icell"><svg class="ti-s" viewBox="0 0 24 24"><use href="#sketchlock"/></svg></span>
        <span class="lab">スケッチ1</span>
      </div></div>
      <div class="line l2"><div class="row">
        <svg class="eye" viewBox="0 0 22 16"><use href="#eyeoff"/></svg>
        <span class="icell"><svg class="ti-s" viewBox="0 0 24 24"><use href="#sketchlock"/></svg></span>
        <span class="lab">スケッチ2</span>
      </div></div>
      <div class="line l2"><div class="row">
        <svg class="eye" viewBox="0 0 22 16"><use href="#eyeoff"/></svg>
        <span class="icell"><svg class="ti-s" viewBox="0 0 24 24"><use href="#sketchlock"/></svg></span>
        <span class="lab">スケッチ3</span>
      </div></div>
      <div class="line l2"><div class="row">
        <svg class="eye" viewBox="0 0 22 16"><use href="#eyeoff"/></svg>
        <span class="icell"><svg class="ti-s" viewBox="0 0 24 24"><use href="#sketchlock"/></svg></span>
        <span class="lab">スケッチ4</span>
      </div></div>
      <div class="line l1">
        <svg class="tw twc" viewBox="0 0 11 13"><use href="#twclosed"/></svg>
        <div class="row">
          <svg class="eye" viewBox="0 0 22 16"><use href="#eye"/></svg>
          <span class="icell"><svg class="fold" viewBox="0 0 22 17"><use href="#folder"/></svg></span>
          <span class="lab">コンストラクション</span>
        </div>
      </div>
    </div>
  </aside>

  <svg class="cursor" viewBox="0 0 18 23"><path d="M1 1V18L5 14.500L8.500 22L12 20.500L8.500 13.500L14.500 13Z" fill="#fff" stroke="#333" stroke-width="1"/></svg>

  <div class="comments">
    <span class="panelname">コメント</span>
    <svg class="panelbtn" viewBox="0 0 12 12"><circle cx="6" cy="6" r="6" fill="#333"/><path d="M2.500 5h2.500V2.500h2V5h2.500v2H7v2.500H5V7H2.500Z" fill="#eee"/></svg>
  </div>

  <div class="viewbar">
    <svg class="vi vi-orbit" viewBox="0 0 22 24"><path d="M11 1L15 6H13V21H9V6H7Z" fill="#fff" stroke="#555"/><path d="M8 10C3 11 1 13 1 14.500C1 17 5 18 9 18.500M14 18C18 17.500 21 16 21 14C21 12.500 18 11 14 10" fill="none" stroke="#444" stroke-width="1.100"/></svg>
    <span class="caret vc"></span>
    <svg class="vi" viewBox="0 0 22 22"><rect x="2" y="8" width="18" height="13" fill="#ddd" stroke="#333"/><rect x="2" y="11" width="18" height="4" fill="#999"/><path d="M3 8L6 2L8 4L12 2L13 5L18 3L19 8" fill="#bbb" stroke="#555"/></svg>
    <svg class="vi" viewBox="0 0 24 24"><path d="M5 13V9C5 7 7 7 7 9V5C7 3 9.500 3 9.500 5V3.500C9.500 1.500 12 1.500 12 3.500V4.500C12 3 14.500 3 14.500 5V7C14.500 5.500 17 5.500 17 7.500V15C17 20 14 23 10 23C7 23 5.500 21 4 19L1.500 14.500C.5 12.500 3 11 4 13L5 14.500" fill="#fff" stroke="#444"/></svg>
    <svg class="vi" viewBox="0 0 24 24"><circle cx="9.500" cy="10" r="8" fill="#f7f7f7" stroke="#555" stroke-width="1.200"/><path d="M15.500 16L22 22" stroke="#444" stroke-width="3"/><path d="M19 1V5M17 3H21M17 7H21" stroke="#444" fill="none"/></svg>
    <svg class="vi" viewBox="0 0 24 24"><rect x="1" y="1" width="22" height="22" fill="none" stroke="#888" stroke-dasharray="2 2"/><circle cx="9.500" cy="10" r="7.500" fill="#f7f7f7" stroke="#555" stroke-width="1.200"/><path d="M15 16L22 23" stroke="#444" stroke-width="3"/></svg>
    <span class="caret vc"></span>
    <svg class="vi" viewBox="0 0 24 24"><rect x="1" y="1" width="22" height="17" fill="#8fadcf" stroke="#666"/><rect x="3" y="3" width="18" height="13" fill="#a7c0dc" stroke="#5a7897" stroke-width=".7"/><path d="M9 18H15V21H18V23H6V21H9Z" fill="#aaa"/></svg>
    <span class="caret vc"></span>
    <svg class="vi" viewBox="0 0 24 24"><rect x="1" y="1" width="22" height="22" fill="#cfcfcf"/><path d="M1 5H23M1 9H23M1 13H23M1 17H23M1 21H23M5 1V23M9 1V23M13 1V23M17 1V23M21 1V23" stroke="#777" stroke-width=".8"/></svg>
    <span class="caret vc"></span>
    <svg class="vi" viewBox="0 0 24 24"><rect x="1" y="3" width="22" height="19" fill="#89abd6" stroke="#556"/><path d="M12 3V22M1 12H23" stroke="#334" stroke-width="1"/></svg>
    <span class="caret vc"></span>
  </div>
</main>

<footer class="timeline">
  <div class="controls">
    <span class="cbtn"><svg viewBox="0 0 16 16"><rect y="0" width="2" height="16" fill="#555"/><path d="M16 0V16L3 8Z" fill="#666"/></svg></span>
    <span class="cbtn"><svg viewBox="0 0 18 16"><path d="M12 0V16L0 8Z" fill="#666"/><rect x="14" y="5" width="3" height="6.500" fill="#666"/></svg></span>
    <span class="cbtn"><svg viewBox="0 0 18 20"><path d="M1 0V20L17 10Z" fill="#666"/></svg></span>
    <span class="cbtn"><svg viewBox="0 0 18 16"><rect x="1" y="5" width="3" height="6.500" fill="#666"/><path d="M6 0V16L18 8Z" fill="#666"/></svg></span>
    <span class="cbtn"><svg viewBox="0 0 16 16"><path d="M0 0V16L13 8Z" fill="#666"/><rect x="14" y="0" width="2" height="16" fill="#555"/></svg></span>
  </div>
  <div class="track">
    <span class="tli"><svg viewBox="0 0 24 24"><use href="#tlsketch"/></svg></span>
    <span class="tli"><svg viewBox="0 0 24 24"><path d="M1 7L6 2H20V17L15 23H1Z" fill="#6db3e6"/><path d="M1 7L6 2H20L15 7Z" fill="#a9d4f2"/><path d="M1 20H15V23H1Z" fill="#cfe4f5"/><path d="M21 8V2M19.500 4L21 1L22.500 4" stroke="#222" fill="none"/></svg></span>
    <span class="tli"><svg viewBox="0 0 24 24"><use href="#tlsketch"/></svg></span>
    <span class="tli"><svg viewBox="0 0 24 24"><use href="#tlplane"/></svg></span>
    <span class="tli"><svg viewBox="0 0 24 24"><use href="#tlsketch"/></svg></span>
    <span class="tli"><svg viewBox="0 0 24 24"><use href="#tlplane"/></svg></span>
    <span class="tli"><svg viewBox="0 0 24 24"><use href="#tlsketch"/></svg></span>
    <span class="tli"><svg viewBox="0 0 24 24"><path d="M0 1H24V15L18 21H6L0 15Z" fill="#5fa6dd"/><path d="M0 1H24L17 12H7Z" fill="#a9d4f2"/><circle cx="12" cy="17" r="6.500" fill="#fff" stroke="#777"/></svg></span>
    <span class="bracket"></span>
    <span class="playhead"></span>
  </div>
  <svg class="tlgear" viewBox="0 0 18 18"><path d="M7.500 0h3l.5 2.500 1.700.7L15 1.900 17 4l-1.400 2.100.7 1.700L18 8.200v2.900l-2.300.6-.7 1.600 1.300 2.200-2 2-2.200-1.300-1.600.7-.6 2.300h-3l-.5-2.400-1.700-.7L2.800 17l-2-2 1.300-2.100-.7-1.700L-.1 10.800V7.800l2.500-.5.7-1.700L1.800 3.500l2-2 2.200 1.300 1.100-.5ZM9 5.800a3.200 3.200 0 1 0 0 6.400 3.200 3.200 0 0 0 0-6.400Z" fill="#666"/></svg>
</footer>
</body>
</html>
```
FILE: styles.css
```css
* { box-sizing: border-box; }
html, body { margin: 0; padding: 0; }
body {
  width: 1724px; height: 1080px; overflow: hidden;
  display: flex; flex-direction: column;
  background: #fff; color: #555;
  font-family: "Noto Sans", "Noto Sans CJK JP", sans-serif;
  font-feature-settings: "palt" 1;
}
svg { display: block; flex: none; }
.defs { position: absolute; width: 0; height: 0; }

.caret {
  display: inline-block; width: 0; height: 0; flex: none;
  border-left: 4px solid transparent; border-right: 4px solid transparent;
  border-top: 5px solid #333;
}

/* title bar */
.titlebar { height: 30px; background: #f3f3f3; display: flex; align-items: center; padding-left: 3px; flex: none; }
.appicon { width: 19px; height: 21px; }
.appicon-f { font: 700 13px "Liberation Sans", sans-serif; fill: #fff; text-anchor: middle; }
.appicon-s { font: 700 5px "Liberation Sans", sans-serif; fill: #f5c9a5; text-anchor: middle; }
.title { margin-left: 8px; font-size: 15.200px; color: #8c8c8c; white-space: nowrap; }
.winctl { margin-left: auto; display: flex; align-items: center; }
.winctl svg { width: 14px; height: 14px; margin-right: 49px; }
.winctl svg:last-child { margin-right: 26px; }

/* tab bar */
.tabbar { height: 44px; background: #cdcdcd; display: flex; align-items: flex-end; flex: none; }
.qat { width: 318px; height: 44px; display: flex; align-items: center; padding-left: 11px; flex: none; }
.q-grid { width: 20px; height: 20px; }
.q-doc { width: 18px; height: 22px; margin-left: 26px; }
.q-c1 { margin-left: 9px; border-top-color: #666; border-left-width: 5px; border-right-width: 5px; border-top-width: 6px; }
.q-save { width: 20px; height: 20px; margin-left: 24px; }
.q-undo { width: 20px; height: 20px; margin-left: 24px; }
.q-c2 { margin-left: 6px; border-top-color: #666; border-left-width: 5px; border-right-width: 5px; border-top-width: 6px; }
.q-redo { width: 20px; height: 20px; margin-left: 16px; }
.q-c3 { margin-left: 7px; border-top-color: #9a9a9a; border-left-width: 5px; border-right-width: 5px; border-top-width: 6px; }
.hometab { margin: 6px 0 0 13px; width: 52px; height: 37px; background: #bdbdbd; border-radius: 3px 3px 0 0; display: flex; align-items: center; justify-content: center; padding-top: 6px; flex: none; }
.hometab svg { width: 20px; height: 18px; }
.doctab { width: 1108px; height: 38px; background: #f3f3f3; border-radius: 4px 4px 0 0; display: flex; align-items: center; padding-left: 514px; padding-bottom: 0; flex: none; position: relative; }
.cube { width: 20px; height: 23px; }
.doctitle { margin-left: 8px; font-size: 14.500px; color: #666; }
.tabclose { position: absolute; left: 1087px; top: 13px; width: 12px; height: 12px; }
.plustab { margin-left: 6px; width: 37px; height: 38px; background: #bdbdbd; border-radius: 3px 3px 0 0; display: flex; align-items: center; justify-content: center; flex: none; }
.plustab svg { width: 16px; height: 16px; }
.tabicons { height: 38px; display: flex; align-items: center; padding-left: 15px; }
.ti { width: 22px; height: 22px; margin-right: 23px; }
.help-q { font: 700 16px "Liberation Sans", sans-serif; fill: #ddd; text-anchor: middle; }
.avatar { width: 30px; height: 30px; margin-left: 7px; }

/* ribbon */
.ribbon { height: 110px; background: #f3f3f3; border-bottom: 1px solid #dedede; display: flex; flex: none; }
.design-wrap { width: 170px; flex: none; padding: 14px 0 0 16px; }
.design {
  width: 147px; height: 81px; background: #f3f3f3; border: 1.500px solid #cfcfcf; border-radius: 4px;
  font: 500 14px "Noto Sans CJK JP", sans-serif; font-feature-settings: "palt" 1; color: #222;
  letter-spacing: -.5px;
  display: flex; align-items: center; justify-content: center; gap: 9px;
  padding: 0 0 2px;
}
.ribbon-main { flex: 1; min-width: 0; }
.tabs {
  display: grid; height: 31px; margin-left: 17px;
  grid-template-columns: 75px 142px 72px 164px 96px 162px 58px;
  font-size: 14px; color: #5a5a5a; text-align: center; line-height: 30px;
}
.tab { letter-spacing: -1.100px; white-space: nowrap; }
.tab:last-child { letter-spacing: 0; }
.tab.active { color: #2e9bd0; border-bottom: 4px solid #38a0c4; height: 31px; }
.groups {
  display: grid; margin-top: 3px; height: 70px;
  grid-template-columns: 303px 93px 304px 189px 159px 79px 81px 246px 82px;
}
.group { border-right: 1.500px solid #d6d6d6; display: flex; flex-direction: column; align-items: center; min-width: 0; }
.group.last { border-right: 0; }
.icons { display: flex; height: 46px; justify-content: center; padding-left: 5px; }
.icons.noshift { padding-left: 0; }
.ic { width: 46px; height: 46px; margin: 0 6.200px; }
.selicons { margin-top: -2px; margin-bottom: 2px; }
.sel { width: 51px; height: 51px; }
.svgtext { font: 700 11px "Liberation Sans", sans-serif; fill: #fff; text-anchor: middle; letter-spacing: .4px; }
.glabel { margin-top: 9px; display: flex; align-items: center; gap: 4px; font-size: 14px; line-height: 14px; color: #666; white-space: nowrap; }
.glabel.kana { letter-spacing: -1px; }
.glabel.kana-long { letter-spacing: -1.900px; }

/* canvas */
.canvas { position: relative; flex: 1; min-height: 0; background: #fff; }
.scene { position: absolute; left: 0; top: 0; width: 1724px; height: 829px; }
.shadow { fill: #cccccc; }
.shadow-faint { fill: #fcfcfc; }
.face-top { fill: #a1a39d; }
.face-side { fill: #a3a59f; }
.edge { fill: none; stroke: #222; stroke-width: 1; }
.sketch { fill: none; stroke: #3a3a3a; stroke-width: .9; }
.cube-face { fill: #f1f1f1; }
.cube-face2 { fill: #f6f6f6; }
.cube-face3 { fill: #e3e3e3; }
.cube-edge { fill: none; stroke: #a5a5a5; stroke-width: 1; stroke-dasharray: 7 2; }
.cube-text { font: 500 30px "Noto Sans CJK JP", sans-serif; fill: #8c8c8c; text-anchor: middle; }
.cube-z { font: 700 17px "Liberation Sans", sans-serif; fill: #7a78d0; text-anchor: middle; }
.cube-x { font: 400 17px "Liberation Sans", sans-serif; fill: #e0707e; text-anchor: middle; }

/* browser panel */
.browser { position: absolute; left: 5px; top: 11px; width: 403px; }
.panelhead, .comments {
  height: 32px; background: #f1f1f1; border: 1px solid #e2e2e2; border-bottom: 2px solid #cfcfcf;
  display: flex; align-items: center; padding: 0 13px 0 33px; position: relative;
}
.rew { position: absolute; left: 7px; top: 12px; width: 14px; height: 9px; }
.panelname { font-size: 14px; color: #777; letter-spacing: -.6px; line-height: 26px; }
.panelbtn { margin-left: auto; width: 12px; height: 12px; }
.tree { margin-top: 8px; display: flex; flex-direction: column; gap: 5.400px; }
.line { display: flex; align-items: center; height: 27px; position: relative; }
.l0 { padding-left: 25px; }
.l1 { padding-left: 49px; }
.l2 { padding-left: 97px; }
.tw { flex: none; }
.twa { width: 11px; height: 11px; margin-right: 13px; }
.twc { width: 9px; height: 13px; margin: 0 14px 0 1px; }
.glow { filter: drop-shadow(0 0 3px #2f6f9f); }
.row { height: 27px; background: #f3f3f3; display: flex; align-items: center; padding-right: 15px; }
.row .eye { width: 21px; height: 15px; margin: 0 4.500px; }
.eye.dim { opacity: .72; }
.icell { width: 36px; display: flex; justify-content: center; align-items: center; margin-right: 13px; }
.fold { width: 21px; height: 17px; }
.ti-s { width: 22px; height: 22px; }
.lab { font-size: 13.500px; color: #4a4a4a; white-space: nowrap; letter-spacing: -.95px; padding-bottom: 2px; }
.lab-kanji { letter-spacing: 0; }
.lat { font-size: 15px; letter-spacing: 0; color: #333; }
.root { padding: 0 8px 0 0; width: 183px; }
.root .eye { margin: 0 6px 0 4px; }
.rootbox { width: 115px; height: 21px; margin-left: 3px; background: #8c8c8c; display: flex; align-items: center; padding-left: 6px; }
.rootbox svg { width: 17px; height: 17px; }
.rootbox b { margin-left: 21px; font-size: 14.500px; color: #fff; letter-spacing: -.2px; font-weight: 700; white-space: nowrap; }
.radio { width: 18px; height: 18px; margin-left: 6px; }
.doc { padding-left: 4px; padding-right: 11px; }
.gear { width: 17px; height: 17px; margin: 0 18px 0 1px; }
.fold-nv { width: 22px; height: 17px; margin-right: 20px; }
.lab-doc { letter-spacing: -.7px; }
.lab-nv { letter-spacing: -.85px; }
.cursor { position: absolute; left: 55px; top: 424px; width: 18px; height: 23px; }
.comments { position: absolute; left: 5px; bottom: 6px; width: 403px; }

/* view bar */
.viewbar {
  position: absolute; left: 703px; bottom: 8px; width: 319px; height: 32px;
  background: #f3f3f3; display: flex; align-items: center; padding-left: 5px;
}
.vi { width: 22px; height: 22px; margin-left: 14px; }
.vi-orbit { margin-left: 0; }
.vc { margin-left: 6px; margin-right: 0; }
.viewbar .vc + .vi { margin-left: 6px; }

/* timeline */
.timeline { height: 67px; flex: none; background: #f2f2f2; border-top: 1px solid #e4e4e4; display: flex; align-items: center; padding-left: 6px; }
.controls { display: flex; align-items: center; flex: none; }
.cbtn { width: 33.700px; display: flex; justify-content: center; }
.cbtn svg { height: 16px; width: auto; min-width: 16px; }
.cbtn:nth-child(3) svg { height: 20px; }
.track { position: relative; display: flex; margin-left: 16.500px; height: 100%; align-items: center; padding-bottom: 1px; }
.tli { width: 32.400px; display: flex; justify-content: center; margin-top: -2px; }
.tli svg { width: 22px; height: 22px; }
.bracket {
  position: absolute; left: 17px; top: 49px; width: 226px; height: 7px;
  border: 2px solid #c9c9c9; border-top: 0; border-bottom-width: 3px;
  background: repeating-linear-gradient(90deg, #c9c9c9 0 2px, transparent 2px 32.400px);
}
.playhead { position: absolute; left: 258px; top: 19px; width: 3px; height: 37px; background: #555; }
.playhead::before {
  content: ""; position: absolute; left: -6.500px; top: -6px; width: 16px; height: 11px;
  background: #555; clip-path: polygon(0 0, 100% 0, 100% 35%, 60% 100%, 40% 100%, 0 35%);
}
.tlgear { margin-left: auto; margin-right: 20px; width: 20px; height: 20px; }
```
